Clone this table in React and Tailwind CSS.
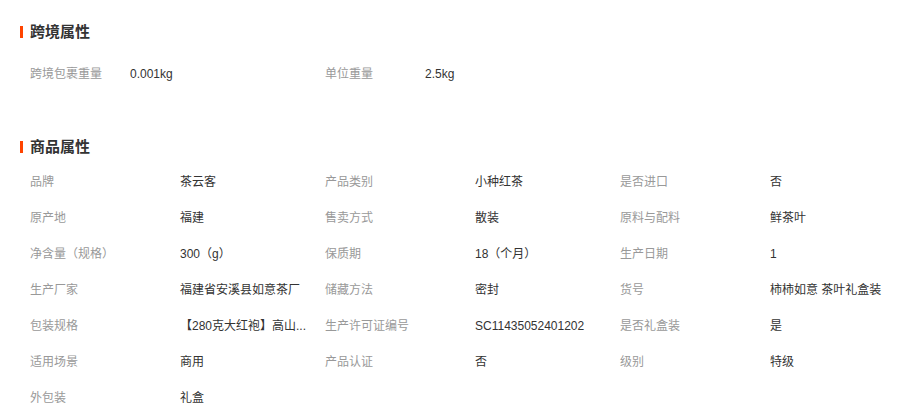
import React from "react";

const cross = [
  ["跨境包裹重量", "0.001kg"],
  ["单位重量", "2.5kg"],
];

const attrs = [
  ["品牌", "茶云客"],
  ["产品类别", "小种红茶"],
  ["是否进口", "否"],
  ["原产地", "福建"],
  ["售卖方式", "散装"],
  ["原料与配料", "鲜茶叶"],
  ["净含量（规格）", "300（g）"],
  ["保质期", "18（个月）"],
  ["生产日期", "1"],
  ["生产厂家", "福建省安溪县如意茶厂"],
  ["储藏方法", "密封"],
  ["货号", "柿柿如意 茶叶礼盒装"],
  ["包装规格", "【280克大红袍】高山..."],
  ["生产许可证编号", "SC11435052401202"],
  ["是否礼盒装", "是"],
  ["适用场景", "商用"],
  ["产品认证", "否"],
  ["级别", "特级"],
  ["外包装", "礼盒"],
];

function Heading({ children }) {
  return (
    <div className="flex items-center h-[20px]">
      <div className="w-[3px] h-[12px] bg-[#ff4400] mr-[7px]" />
      <span className="text-[15px] font-bold text-[#333333] leading-[20px]">{children}</span>
    </div>
  );
}

export default function App() {
  return (
    <div
      className="w-[914px] h-[413px] bg-white pl-[20px] pt-[22px] overflow-hidden"
      style={{ fontFamily: '"Liberation Sans", "Noto Sans CJK SC", sans-serif' }}
    >
      <Heading>跨境属性</Heading>
      <div className="mt-[14px] pl-[10px] flex">
        {cross.map(([k, v]) => (
          <div key={k} className="flex w-[295px] h-[36px] items-center text-[12px]">
            <div className="w-[100px] text-[#999999]">{k}</div>
            <div className="w-[195px] text-[#333333]">{v}</div>
          </div>
        ))}
      </div>
      <div className="mt-[45px]">
        <Heading>商品属性</Heading>
      </div>
      <div className="mt-[7px] pl-[10px] grid grid-cols-[295px_295px_295px]">
        {attrs.map(([k, v]) => (
          <div key={k} className="flex h-[36px] items-center text-[12px]">
            <div className="w-[150px] shrink-0 text-[#999999] whitespace-nowrap">{k}</div>
            <div className="w-[145px] shrink-0 text-[#333333] whitespace-nowrap">{v}</div>
          </div>
        ))}
      </div>
    </div>
  );
}
